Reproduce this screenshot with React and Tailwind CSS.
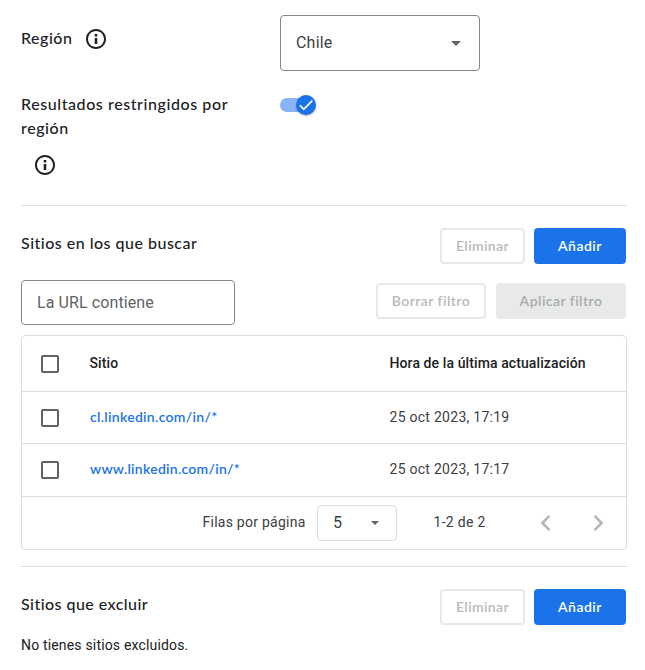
import React from "react";

const BRAND = "font-[family-name:Lato,sans-serif]";
const TITLE = `${BRAND} font-medium text-base leading-6 text-[#202124]`;
const BUTTON = `${BRAND} font-semibold h-9 rounded text-sm leading-none pb-px`;

function InfoIcon() {
  return (
    <svg className="size-6 shrink-0 fill-[#202124]" viewBox="0 0 24 24">
      <path d="M10.700 7h2.600v2.400h-2.600zm0 4h2.600v6h-2.600zM12 2C6.480 2 2 6.480 2 12s4.480 10 10 10 10-4.480 10-10S17.520 2 12 2zm0 18c-4.410 0-8-3.590-8-8s3.590-8 8-8 8 3.590 8 8-3.590 8-8 8z" />
    </svg>
  );
}

function Chevron({ points }) {
  return (
    <svg className="size-7 fill-none stroke-[#b5b6b8] stroke-[2.5]" viewBox="0 0 28 28">
      <polyline points={points} />
    </svg>
  );
}

function Checkbox() {
  return <span className="block size-[18px] shrink-0 rounded-[2px] border-2 border-[#5f6368]" />;
}

function Outlined({ className, children }) {
  return (
    <button className={`${BUTTON} border-2 border-[#e7e8e8] text-[#b8b9ba] ${className}`}>
      {children}
    </button>
  );
}

function SectionHeader({ title, titleClass }) {
  return (
    <div className="flex h-9 items-start">
      <h2 className={`${TITLE} grow pt-[3px] ${titleClass}`}>{title}</h2>
      <Outlined className="w-[85px] tracking-[0.38px]">Eliminar</Outlined>
      <button className={`${BUTTON} mr-px ml-[9px] w-[92px] bg-[#1a73e8] tracking-[0.5px] text-white`}>
        Añadir
      </button>
    </div>
  );
}

function SiteRow({ url, urlClass, date, className }) {
  return (
    <div className={`flex items-center border-b border-[#dadce0] pl-[19px] ${className}`}>
      <Checkbox />
      <a className={`${BRAND} -mt-[2px] ml-[31px] w-[299.500px] text-sm leading-5 font-semibold text-[#1a73e8] ${urlClass}`}>{url}</a>
      <span className="-mt-[2px] text-sm leading-5 tracking-[0.27px]">{date}</span>
    </div>
  );
}

export default function App() {
  return (
    <main className="flex h-[670px] w-[645px] flex-col overflow-hidden bg-white pt-[15px] pr-[18px] pl-[21px] font-[Roboto,sans-serif] text-[#3c4043]">
      <div className="flex h-14">
        <div className="flex h-12 w-[259px] items-center">
          <span className={`${TITLE} -mt-[2px] w-[63px] tracking-[0.5px]`}>Región</span>
          <InfoIcon />
        </div>
        <div className="flex h-14 w-[200px] items-center justify-between rounded border border-[#80868b] pr-[18px] pl-[15px]">
          <span className="text-base leading-6 tracking-[0.2px]">Chile</span>
          <span className="border-x-[5px] border-t-[5px] border-x-transparent border-t-[#5f6368]" />
        </div>
      </div>

      <div className="mt-[21px] flex h-[113px]">
        <div className="w-[259px]">
          <p className={`${TITLE} w-[230px] tracking-[0.58px]`}>
            Resultados restringidos por<br />región
          </p>
          <div className="mt-[13px] ml-3"><InfoIcon /></div>
        </div>
        <div className="mt-[3px] flex h-5 w-9 items-center">
          <span className="h-[14px] w-[26px] rounded-l-full bg-[#8ab4f8]" />
          <span className="-ml-[10px] flex size-5 shrink-0 items-center justify-center rounded-full bg-[#1a73e8] shadow-[0_1px_2px_rgba(0,0,0,0.3)]">
            <svg className="size-[18px] fill-white stroke-white stroke-[0.4]" viewBox="0 0 24 24">
              <path d="M9 16.170 4.830 12l-1.420 1.410L9 19 21 7l-1.410-1.410z" />
            </svg>
          </span>
        </div>
      </div>

      <hr className="border-t border-[#dadce0]" />
      <div className="mt-[22px]">
        <SectionHeader title="Sitios en los que buscar" titleClass="tracking-[0.49px]" />
      </div>

      <div className="mt-4 flex h-[45px]">
        <div className="flex w-[214px] items-center rounded border border-[#80868b] pl-[15px] text-base text-[#5f6368] tracking-[0.1px]">
          La URL contiene
        </div>
        <div className="mt-[3px] mr-px ml-auto flex h-9 gap-[10px]">
          <Outlined className="w-[110px] tracking-[0.45px]">Borrar filtro</Outlined>
          <button className={`${BUTTON} w-[130px] bg-[#e8eae9] tracking-[0.46px] text-[#a9abab]`}>
            Aplicar filtro
          </button>
        </div>
      </div>

      <section className="mt-[10px] h-[215px] rounded border border-[#dadce0]">
        <div className="flex h-14 items-center border-b border-[#dadce0] pl-[19px] text-sm font-medium text-[#202124]">
          <Checkbox />
          <span className="-mt-px ml-[30.500px] w-[300px] tracking-[0.1px]">Sitio</span>
          <span className="-mt-px tracking-[0.1px]">Hora de la última actualización</span>
        </div>
        <SiteRow className="h-[52px]" url="cl.linkedin.com/in/*" urlClass="tracking-[0.3px]" date="25 oct 2023, 17:19" />
        <SiteRow className="h-[53px]" url="www.linkedin.com/in/*" urlClass="tracking-[0.27px]" date="25 oct 2023, 17:17" />
        <div className="flex h-[52px] items-center pl-[180.500px] text-sm">
          <span className="-mt-[2px] w-[114.500px] tracking-[0.25px]">Filas por página</span>
          <span className="flex h-9 w-20 items-center justify-between rounded border border-[#dadce0] pr-[17px] pl-[15px] text-base">
            5
            <span className="border-x-4 border-t-4 border-x-transparent border-t-[#5f6368]" />
          </span>
          <span className="-mt-[2px] ml-[36.500px] w-[98.500px] tracking-[0.3px]">1-2 de 2</span>
          <div className="flex gap-6">
            <Chevron points="17.500,6.800 10.300,14 17.500,21.200" />
            <Chevron points="10.500,6.800 17.700,14 10.500,21.200" />
          </div>
        </div>
      </section>

      <hr className="mt-4 border-t border-[#dadce0]" />
      <div className="mt-[22px]">
        <SectionHeader title="Sitios que excluir" titleClass="tracking-[0.45px]" />
      </div>
      <p className="mt-[10px] text-sm leading-5 tracking-[0.17px] text-[#202124]">No tienes sitios excluidos.</p>
    </main>
  );
}
